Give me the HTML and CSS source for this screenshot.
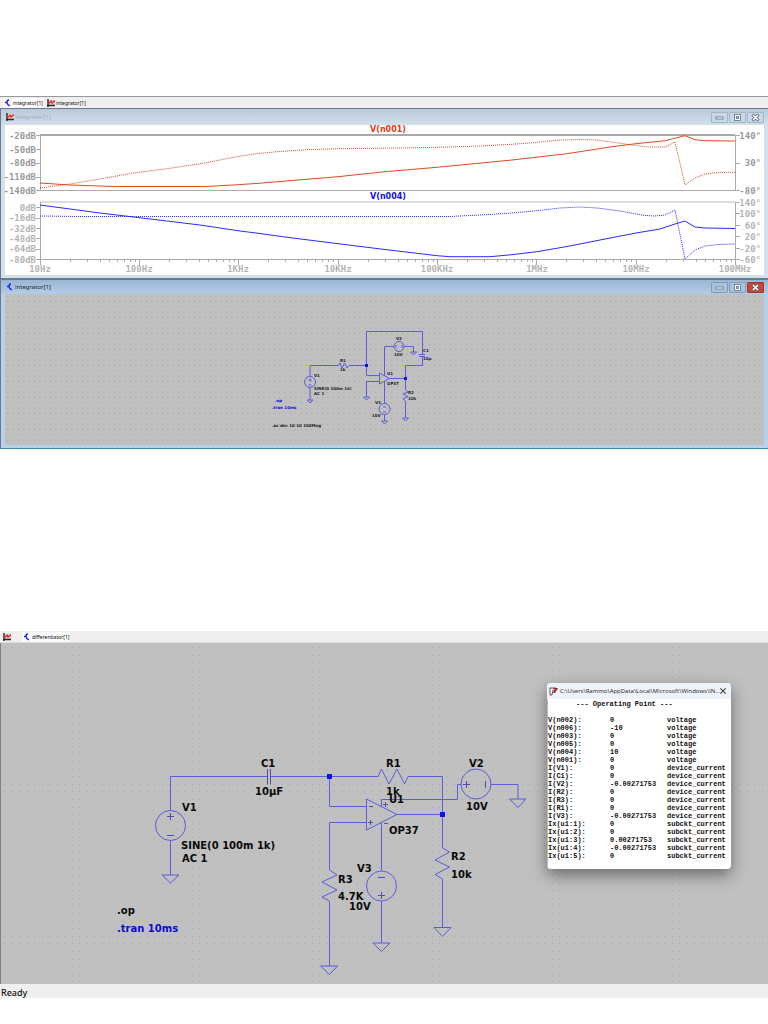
FILE: index.html
```html
<!DOCTYPE html>
<html lang="en">
<head>
<meta charset="utf-8">
<meta name="viewport" content="width=device-width, initial-scale=1">
<title>Circuit simulation</title>
<link rel="stylesheet" href="styles.css">
</head>
<body>
<svg class="sprite" aria-hidden="true">
  <symbol id="schematic-icon" viewBox="0 0 8 8"><path d="M5 1C3 1 3 2 3 3.500C3 5 4 6 6 7M1 3.500H3" fill="none" stroke="#1818ff" stroke-width="1.300"/></symbol>
  <symbol id="plot-icon" viewBox="0 0 8 8"><path d="M1 1H8V6H1Z" fill="#e6c4c4"/><path d="M1 0V8M0 6.500H8" stroke="#302828" stroke-width="1.400"/><path d="M2 4.500L4 2L5 4L8 1.500" fill="none" stroke="#e02020" stroke-width="1.200"/></symbol>
  <symbol id="min-icon" viewBox="0 0 9 9"><rect x="1" y="4" width="7" height="2" fill="#fff" stroke="#5f7083" stroke-width=".8"/></symbol>
  <symbol id="max-icon" viewBox="0 0 9 9"><rect x="1.500" y="1.500" width="6" height="6" fill="#fff" stroke="#5f7083" stroke-width=".8"/><rect x="3.500" y="3.500" width="2" height="2" fill="#b4c4d6" stroke="#5f7083" stroke-width=".8"/></symbol>
  <symbol id="close-icon" viewBox="0 0 9 9"><path d="M1.500 1.500L7.500 7.500M7.500 1.500L1.500 7.500" stroke="#556070" stroke-width="3"/><path d="M2 2L7 7M7 2L2 7" stroke="#fff" stroke-width="1.700"/></symbol>
</svg>

<main>
<section class="workspace">
  <nav class="tabs">
    <button class="tab active"><svg class="icon"><use href="#schematic-icon"/></svg>integrator[1]</button>
    <button class="tab"><svg class="icon"><use href="#plot-icon"/></svg>integrator[1]</button>
  </nav>

  <article class="window inactive">
    <header class="titlebar">
      <svg class="icon"><use href="#plot-icon"/></svg>
      <h2 class="title">integrator[1]</h2>
      <button class="control" aria-label="Minimize"><svg><use href="#min-icon"/></svg></button>
      <button class="control" aria-label="Maximize"><svg><use href="#max-icon"/></svg></button>
      <button class="control" aria-label="Close"><svg><use href="#close-icon"/></svg></button>
    </header>
    <svg class="drawing plot" viewBox="5 125 759 150" role="img" aria-label="Bode plots of V(n001) and V(n004)">
      <defs>
        <path id="decade" d="M0 260v5M30 260v2M47 260v2M60 260v2M69 260v2M77 260v2M84 260v2M90 260v2M95 260v2"/>
      </defs>
      <g class="axis">
        <path class="heavy" d="M40 135H735"/>
        <path d="M40 135V190H735V135M36 135h4M36 149h4M36 163h4M36 177h4M36 190h4M735 135h5M735 163h5M735 190h5"/>
        <path class="light" d="M40 202H735"/>
        <path d="M40 202V259H735V202M36 207h4M36 218h4M36 228h4M36 238h4M36 249h4M36 259h4M735 202h5M735 213h5M735 225h5M735 236h5M735 248h5M735 259h5"/>
        <use href="#decade" x="40"/><use href="#decade" x="139"/><use href="#decade" x="238"/><use href="#decade" x="338"/><use href="#decade" x="437"/><use href="#decade" x="536"/><use href="#decade" x="636"/>
        <path d="M735 260v5"/>
      </g>
      <g class="scale dark end">
        <text x="36" y="139">-20dB</text><text x="36" y="153">-50dB</text><text x="36" y="166">-80dB</text><text x="36" y="180">-110dB</text><text x="36" y="194">-140dB</text>
        <text x="761" y="139">140°</text><text x="761" y="166">30°</text><text x="761" y="194">-80°</text>
      </g>
      <g class="scale end">
        <text x="36" y="211">0dB</text><text x="36" y="221">-16dB</text><text x="36" y="232">-32dB</text><text x="36" y="242">-48dB</text><text x="36" y="252">-64dB</text><text x="36" y="263">-80dB</text>
        <text x="761" y="206">140°</text><text x="761" y="217">100°</text><text x="761" y="229">60°</text><text x="761" y="240">20°</text><text x="761" y="252">-20°</text><text x="761" y="263">-60°</text>
      </g>
      <g class="scale middle">
        <text x="40" y="272">10Hz</text><text x="139" y="272">100Hz</text><text x="238" y="272">1KHz</text><text x="338" y="272">10KHz</text><text x="437" y="272">100KHz</text><text x="537" y="272">1MHz</text><text x="636" y="272">10MHz</text><text x="735" y="272">100MHz</text>
      </g>
      <text class="trace-name red-text" x="388" y="132">V(n001)</text>
      <text class="trace-name blue-text" x="388" y="199">V(n004)</text>
      <polyline class="trace red" points="40,183 70,185 100,186 115,186.5 205,186.5 233,185 256,183.5 338,176.7 385,171.7 437,167.3 512,160 567,153.7 612,146.7 636,143.7 665,140.7 685,135.7 695,139.7 705,140.7 735,141"/>
      <polyline class="trace dotted red" points="40,188 70,184 100,179 130,173.5 170,168.3 205,163 235,157 256,153.7 280,151.5 310,149.5 340,148.7 400,148 450,147 480,146 512,144.3 535,142.5 560,140 580,139.5 597,140 615,142.5 632,145 648,147 665,147 675,142 685,185 695,178 705,174 718,172.5 735,172.3"/>
      <polyline class="trace blue" points="40,205 70,209 100,213 138,217.5 200,225 240,231 256,233 285,237 338,243.7 385,249.5 437,255.7 450,256.7 490,256.7 512,254.7 537,251.7 567,246.5 600,240 636,233 660,229 675,224 685,221 695,227 705,228 735,228.5"/>
      <polyline class="trace dotted blue" points="40,216 80,216.5 450,216.5 480,215 512,213 537,210.7 560,208 580,207 597,208 620,211 645,215.5 655,216 665,215 675,210 685,259 695,250 705,246 718,244.5 735,244"/>
    </svg>
  </article>

  <article class="window focused">
    <header class="titlebar">
      <svg class="icon"><use href="#schematic-icon"/></svg>
      <h2 class="title">integrator[1]</h2>
      <button class="control" aria-label="Minimize"><svg><use href="#min-icon"/></svg></button>
      <button class="control" aria-label="Maximize"><svg><use href="#max-icon"/></svg></button>
      <button class="control danger" aria-label="Close"><svg><use href="#close-icon"/></svg></button>
    </header>
    <svg class="drawing" viewBox="5 294 759 151" role="img" aria-label="Integrator schematic">
      <defs>
        <pattern id="fine-grid" x="7" y="296" width="16" height="16" patternUnits="userSpaceOnUse">
          <path class="dot" d="M0 0h1v1h-1zM6 0h1v1h-1zM11 0h1v1h-1zM0 5h1v1h-1zM6 5h1v1h-1zM11 5h1v1h-1zM0 10h1v1h-1zM6 10h1v1h-1zM11 10h1v1h-1z"/>
        </pattern>
      </defs>
      <rect class="board" x="5" y="294" width="759" height="151"/>
      <rect fill="url(#fine-grid)" x="5" y="294" width="759" height="151"/>
      <g class="wire">
        <path d="M310 376.500V365.500H338.500L340 363L342 368L344.500 363L347 368L349 365.500H366.500V331.500H422.500V354M422.500 356.500V365.500H405.500V390L408 392L403 394L408 396.500L403 399L405.500 401V418"/>
        <path d="M419 354.500H425M419 356.500H425M366.500 365.500V375.500H380M380 381.500H366.500V397M389 378.500H405.500M384.500 376V346.500H394M404 346.500H413.500V352M384.500 381V404M384.500 414.500V421M310 387.500V400"/>
        <path d="M379.500 373V384L389.500 378.500ZM307 400H313L310 403ZM363.500 397H369.500L366.500 400ZM402.500 418H408.500L405.500 421ZM381.500 421H387.500L384.500 424ZM410.500 352H416.500L413.500 355Z"/>
        <path d="M308.500 380H311.500M310 378.500V381.500M308.500 385H311.500M396 345V348M402 345V348M383 407H386M383 412H386"/>
        <circle cx="310" cy="382" r="5.500"/><circle cx="399" cy="346.500" r="5"/><circle cx="384.500" cy="409" r="5.500"/>
      </g>
      <path class="node" d="M365 364h3v3h-3zM404 377h3v3h-3z"/>
      <g class="mini">
        <text x="340" y="362">R1</text><text x="340" y="371">1k</text><text x="314" y="377">V1</text><text x="314" y="390">SINE(0 100m 1k)</text><text x="314" y="395">AC 1</text>
        <text x="396" y="340">V2</text><text x="394" y="356">10V</text><text x="423" y="352">C1</text><text x="423" y="360">10µ</text><text x="387" y="375">U1</text><text x="387" y="385">OP37</text>
        <text x="408" y="394">R2</text><text x="408" y="400">10k</text><text x="375" y="404">V3</text><text x="372" y="417">10V</text><text x="272" y="427">.ac dec 10 10 100Meg</text>
        <text class="directive" x="275" y="402">.op</text><text class="directive" x="272" y="409">.tran 10ms</text>
      </g>
    </svg>
  </article>
</section>

<section class="differentiator">
  <nav class="tabs plain">
    <button class="tab" aria-label="Plot"><svg class="icon"><use href="#plot-icon"/></svg></button>
    <button class="tab active"><svg class="icon"><use href="#schematic-icon"/></svg>differentiator[1]</button>
  </nav>
  <div class="canvas">
    <svg class="drawing" viewBox="1 643 767 341" role="img" aria-label="Differentiator schematic">
      <defs>
        <pattern id="wide-grid" x="4" y="647" width="15" height="38" patternUnits="userSpaceOnUse">
          <path class="dot" d="M0 0h1v1h-1zM8 0h1v1h-1zM0 8h1v1h-1zM8 8h1v1h-1zM0 15h1v1h-1zM8 15h1v1h-1zM0 23h1v1h-1zM8 23h1v1h-1zM0 30h1v1h-1zM8 30h1v1h-1z"/>
        </pattern>
      </defs>
      <rect class="board" x="1" y="643" width="767" height="341"/>
      <rect fill="url(#wide-grid)" x="1" y="643" width="767" height="341"/>
      <g class="wire">
        <path d="M170.500 810.500V776.500H267.500M271 776.500H378L381.500 769L389 784L397 769L404.500 784L408 776.500H442.500V848L449.500 852L435 860L449.500 867L435 874.500L442.500 879V927.500"/>
        <path d="M329.500 776.500V806.500H366.500M366.500 822.500H329.500V870L337 875L322 882L337 890L322 897L329.500 901V966"/>
        <path d="M381.500 806.500V799.500H457.500V784.500H461M491 784.500H518V799M397 814.500H442.500M381.500 822.500V871M381.500 901V943M170.500 840.500V875"/>
        <path d="M366.500 799V830L397 814.500ZM162 875H179L170.500 883ZM434 927.500H451L442.500 936.500ZM373 943H390L381.500 951.500ZM320.500 966H337.500L329.500 974.500ZM509.500 799H526L518 807.500Z"/>
        <circle cx="170.500" cy="825.500" r="15"/><circle cx="476" cy="784" r="15"/><circle cx="381.500" cy="886" r="15"/>
      </g>
      <g class="wire symbol">
        <path d="M267.500 769V784.500M270.500 769V784.500M167 816.500H174M170.500 813V820M167 835.500H174M463 784.500H470M466.500 781V788M485.500 781V788M378 877.500H385M378 895.500H385M381.500 892V899M369 806.500H373M368 822.500H373M370.500 820V825M383 804.500H388M385.500 802V807M384 823.500H388"/>
      </g>
      <path class="node" d="M327 774h5v5h-5zM440 812h5v5h-5z"/>
      <g class="label">
        <text x="261" y="767">C1</text><text x="255" y="795">10µF</text><text x="182" y="811">V1</text><text x="181" y="849">SINE(0 100m 1k)</text><text x="182" y="862">AC 1</text>
        <text x="386" y="767">R1</text><text x="386" y="795">1k</text><text x="389" y="803">U1</text><text x="389" y="834">OP37</text><text x="469" y="767">V2</text><text x="466" y="810">10V</text>
        <text x="451" y="860">R2</text><text x="451" y="878">10k</text><text x="357" y="872">V3</text><text x="338" y="883">R3</text><text x="338" y="900">4.7K</text><text x="349" y="910">10V</text>
        <text x="117" y="914">.op</text><text class="directive" x="117" y="932">.tran 10ms</text>
      </g>
    </svg>

    <div class="dialog" role="dialog" aria-labelledby="dialog-title">
      <header class="dialog-bar">
        <svg class="dialog-icon" viewBox="0 0 9 9"><path d="M1 1H7V3H4L3 8H1Z" fill="#fff" stroke="#333" stroke-width=".8"/><path d="M3 1H9L6 6H4L6 2" fill="#a02030"/></svg>
        <h2 class="dialog-title" id="dialog-title">C:\Users\Rammo\AppData\Local\Microsoft\Windows\IN...</h2>
        <button class="dialog-close" aria-label="Close"><svg viewBox="0 0 6 6"><path d="M1 1L5 5M5 1L1 5" stroke="#444" stroke-width=".8"/></svg></button>
      </header>
      <div class="report">
        <table>
          <caption>--- Operating Point ---</caption>
          <tbody>
            <tr><th>V(n002):</th><td>0</td><td>voltage</td></tr>
            <tr><th>V(n006):</th><td>-10</td><td>voltage</td></tr>
            <tr><th>V(n003):</th><td>0</td><td>voltage</td></tr>
            <tr><th>V(n005):</th><td>0</td><td>voltage</td></tr>
            <tr><th>V(n004):</th><td>10</td><td>voltage</td></tr>
            <tr><th>V(n001):</th><td>0</td><td>voltage</td></tr>
            <tr><th>I(V1):</th><td>0</td><td>device_current</td></tr>
            <tr><th>I(C1):</th><td>0</td><td>device_current</td></tr>
            <tr><th>I(V2):</th><td>-0.00271753</td><td>device_current</td></tr>
            <tr><th>I(R2):</th><td>0</td><td>device_current</td></tr>
            <tr><th>I(R3):</th><td>0</td><td>device_current</td></tr>
            <tr><th>I(R1):</th><td>0</td><td>device_current</td></tr>
            <tr><th>I(V3):</th><td>-0.00271753</td><td>device_current</td></tr>
            <tr><th>Ix(u1:1):</th><td>0</td><td>subckt_current</td></tr>
            <tr><th>Ix(u1:2):</th><td>0</td><td>subckt_current</td></tr>
            <tr><th>Ix(u1:3):</th><td>0.00271753</td><td>subckt_current</td></tr>
            <tr><th>Ix(u1:4):</th><td>-0.00271753</td><td>subckt_current</td></tr>
            <tr><th>Ix(u1:5):</th><td>0</td><td>subckt_current</td></tr>
          </tbody>
        </table>
      </div>
    </div>
  </div>
  <footer class="status">Ready</footer>
</section>
</main>
</body>
</html>
```
FILE: styles.css
```css
* { box-sizing: border-box; }
body { margin: 0; background: #fff; font-family: "Noto Sans", sans-serif; }
main { padding: 96px 0 24px; }
h2 { margin: 0; font-weight: 400; }
button { margin: 0; padding: 0; border: 0; background: none; font: inherit; color: inherit; }
svg { display: block; }
.sprite { position: absolute; width: 0; height: 0; }
.icon { width: 8px; height: 8px; flex: none; }
.drawing { width: 100%; height: auto; }

/* Tabs */
.tabs { display: flex; align-items: center; gap: 2px; height: 12px; padding-left: 3px; border-top: 1px solid #999; background: #efefef; font-size: 5px; line-height: 8px; color: #111; }
.tabs.plain { border-top: 0; border-bottom: 1px solid #ddd; padding-left: 2px; gap: 10px; }
.tab { display: flex; align-items: center; gap: 1px; height: 10px; padding: 0 1px; }
.tab.active { background: #fafafa; }

/* Child windows */
.window { border: 1px solid #6d7b88; border-right: 0; padding: 0 4px 3px; background: #d3e1ef; }
.titlebar { display: flex; align-items: center; height: 16px; margin: 0 -4px; padding: 0 3px 0 5px; background: linear-gradient(#b9c9db, #d3e0ec); }
.title { flex: 1; padding-left: 1px; font-size: 6px; line-height: 8px; color: #a2aebb; }
.control { display: grid; place-items: center; width: 17px; height: 11px; margin-right: 1px; border: 1px solid #a5b5c8; border-radius: 1px; background: #c9d7e6; }
.control svg { width: 9px; height: 9px; }
.plot { background: #fff; overflow: visible; }
.focused { border-bottom-color: #3f90aa; background: #b7d1eb; }
.focused .titlebar { height: 14px; background: linear-gradient(#9ab6d4, #b2cde8); }
.focused .title { color: #222; }
.focused .control { height: 11px; background: #a9c2dd; border-color: #819bb9; }
.focused .control.danger { background: #c94632; border-color: #943a32; }

/* Plot */
.axis { fill: none; stroke: #aaa; shape-rendering: crispEdges; }
.heavy { stroke-width: 2; }
.light { stroke: #ddd; stroke-width: 2; }
.scale { font: bold 9px "DejaVu Sans Mono", monospace; fill: #b4b4b4; }
.scale.dark { fill: #999; }
.end { text-anchor: end; }
.middle { text-anchor: middle; }
.trace-name { font: bold 8px "DejaVu Sans", sans-serif; text-anchor: middle; }
.trace { fill: none; stroke-width: 1; }
.dotted { stroke-dasharray: 1 1; }
.red { stroke: #e04a20; }
.blue { stroke: #2a2aff; }
.red-text { fill: #e03c10; }
.blue-text { fill: #1010f0; }

/* Schematics */
.board { fill: #c0c0c0; }
.dot { fill: #aaa; }
.wire { fill: none; stroke: #5c5cdc; stroke-width: 1; }
.wire.symbol { stroke: #5050b4; }
.node { fill: #1010f0; }
.label { font: bold 10px "DejaVu Sans", sans-serif; fill: #0a0a0a; }
.mini { font: bold 4px "DejaVu Sans", sans-serif; fill: #222; }
.label .directive, .mini .directive { fill: #0c0cd0; }
.differentiator { margin-top: 182px; }
.canvas { position: relative; border-left: 1px solid #808080; }
.status { height: 14px; padding-left: 1px; background: #efefef; font-size: 9px; line-height: 18px; font-weight: 500; color: #111; }

/* Operating point dialog */
.dialog { position: absolute; top: 40px; right: 37px; width: 184px; border-radius: 4px; background: #fff; overflow: hidden; box-shadow: 0 6px 16px rgba(0, 0, 0, .45); }
.dialog-bar { display: flex; align-items: center; height: 16px; padding: 0 4px 0 2px; background: #eef2f9; }
.dialog-icon { width: 9px; height: 9px; flex: none; }
.dialog-title { flex: 1; min-width: 0; padding-left: 2px; font: 6px/8px "Open Sans", sans-serif; color: #222; white-space: nowrap; }
.dialog-close { flex: none; width: 8px; height: 8px; }
.dialog-close svg { width: 8px; height: 8px; }
.report { height: 170px; border-left: 1px solid #bbb; font: bold 7px/8px "Liberation Mono", monospace; color: #111; }
.report table { width: 100%; table-layout: fixed; border-collapse: collapse; font: inherit; }
.report caption { padding: 1px 0 8px 28px; text-align: left; white-space: nowrap; }
.report th, .report td { padding: 0; font: inherit; text-align: left; white-space: nowrap; }
.report th { width: 62px; }
.report td { width: 57px; }
.report td:last-child { width: auto; }
```
